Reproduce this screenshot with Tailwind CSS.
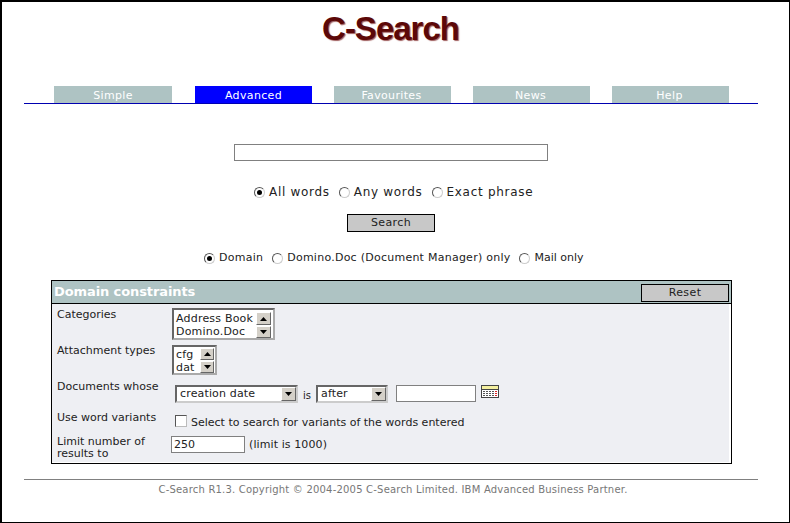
<!DOCTYPE html>
<html lang="en">
<head>
    <meta charset="UTF-8">
    <title>C-Search</title>
    <script src="https://cdn.jsdelivr.net/npm/@tailwindcss/browser@4"></script>
</head>
<body class="bg-white">
    <div class="w-[790px] h-[523px] overflow-hidden border-t-2 border-l-2 border-r border-b border-black flex flex-col font-['DejaVu_Sans',sans-serif] text-[11px] text-[#222]">
        <!-- Title -->
        <h1 class="mt-[7px] h-[40px] pr-[10px] text-center font-['Liberation_Sans',sans-serif] font-bold text-[33px] leading-[40px] tracking-[-1px] text-[#5c0808] [text-shadow:1px_1px_1px_#a06060]">C-Search</h1>

        <!-- Tabs -->
        <div class="mt-[37px] ml-[22px] w-[734px] h-[18px] pl-[30px] flex gap-[22px] border-b border-[#0000b0] text-white tracking-[0.35px]">
            <a class="w-[118px] h-[17px] bg-[#aec3c3] text-center leading-[20px]">Simple</a>
            <a class="ml-[1px] w-[117px] h-[17px] bg-[#0000ff] text-center leading-[20px]">Advanced</a>
            <a class="w-[117px] h-[17px] bg-[#aec3c3] text-center leading-[20px] pr-[2px]">Favourites</a>
            <a class="w-[117px] h-[17px] bg-[#aec3c3] text-center leading-[20px] pr-[2px]">News</a>
            <a class="w-[117px] h-[17px] bg-[#aec3c3] text-center leading-[20px] pr-[2px]">Help</a>
        </div>

        <!-- Search box -->
        <div class="mt-[40px] ml-[232px] w-[314px] h-[17px] border border-[#808080] bg-white"></div>

        <div class="mt-[22px] ml-[252px] flex items-center h-[18px] text-[12px] tracking-[0.7px]">
            <span class="w-[11px] h-[11px] rounded-full border border-t-[#555] border-l-[#555] border-r-[#ccc] border-b-[#ccc] bg-white flex items-center justify-center mr-[4px]"><span class="w-[5px] h-[5px] rounded-full bg-black"></span></span>
            <span class="mr-[9px]">All words</span>
            <span class="w-[11px] h-[11px] rounded-full border border-t-[#555] border-l-[#555] border-r-[#ccc] border-b-[#ccc] bg-white mr-[4px]"></span>
            <span class="mr-[9px]">Any words</span>
            <span class="w-[11px] h-[11px] rounded-full border border-t-[#555] border-l-[#555] border-r-[#ccc] border-b-[#ccc] bg-white mr-[4px]"></span>
            <span>Exact phrase</span>
        </div>

        <div class="mt-[13px] ml-[345px] w-[88px] h-[18px] border border-black bg-[#c8c8c8] text-center leading-[16px] tracking-[0.4px]">Search</div>

        <div class="mt-[18px] ml-[202px] flex items-center h-[16px] tracking-[0.25px]">
            <span class="w-[11px] h-[11px] rounded-full border border-t-[#555] border-l-[#555] border-r-[#ccc] border-b-[#ccc] bg-white flex items-center justify-center mr-[4px]"><span class="w-[5px] h-[5px] rounded-full bg-black"></span></span>
            <span class="mr-[9px]">Domain</span>
            <span class="w-[11px] h-[11px] rounded-full border border-t-[#555] border-l-[#555] border-r-[#ccc] border-b-[#ccc] bg-white mr-[4px]"></span>
            <span class="mr-[9px]">Domino.Doc (Document Manager) only</span>
            <span class="w-[11px] h-[11px] rounded-full border border-t-[#555] border-l-[#555] border-r-[#ccc] border-b-[#ccc] bg-white mr-[4px]"></span>
            <span class="tracking-[0px]">Mail only</span>
        </div>

        <!-- Domain constraints panel -->
        <div class="mt-[14px] ml-[49px] w-[681px] h-[184px] border border-black bg-white flex flex-col">
            <div class="h-[23px] shrink-0 bg-[#aec3c3] border-b border-black flex items-center justify-between pl-[2px] pr-[2px]">
                <span class="text-white font-bold text-[13px] tracking-[-0.1px]">Domain constraints</span>
                <span class="mt-[1px] w-[88px] h-[18px] border border-black bg-[#c8c8c8] text-center leading-[16px] tracking-[0.4px]">Reset</span>
            </div>
            <div class="flex-1 mr-[2px] mb-[1px] bg-[#eeeff3] pl-[5px]">
                <div class="flex h-[41px] pt-[4px] items-start">
                    <span class="w-[115px] -mt-[1px]">Categories</span>
                    <div class="w-[103px] h-[32px] border-2 border-t-[#666] border-l-[#666] border-r-[#aaa] border-b-[#aaa] bg-white flex justify-between leading-[13px] pl-[2px] pt-[2px] pr-[2px] tracking-[0.2px] whitespace-nowrap">
                        <div>Address Book<br>Domino.Doc</div>
                        <div class="w-[15px] flex flex-col gap-[1px]">
                            <span class="h-[13px] bg-[#d4d0c8] border border-t-white border-l-white border-r-[#666] border-b-[#666] flex items-center justify-center"><svg width="7" height="4"><path d="M3.5 0L7 4H0z" fill="#000"/></svg></span>
                            <span class="h-[12px] bg-[#d4d0c8] border border-t-white border-l-white border-r-[#666] border-b-[#666] flex items-center justify-center"><svg width="7" height="4"><path d="M0 0H7L3.5 4z" fill="#000"/></svg></span>
                        </div>
                    </div>
                </div>
                <div class="flex h-[39px] items-start">
                    <span class="w-[115px] -mt-[2px]">Attachment types</span>
                    <div class="w-[45px] h-[30px] border-2 border-t-[#666] border-l-[#666] border-r-[#aaa] border-b-[#aaa] bg-white flex justify-between leading-[13px] pl-[2px] pt-[1px] tracking-[0.2px]">
                        <div>cfg<br>dat</div>
                        <div class="w-[15px] flex flex-col gap-[1px] pr-[1px]">
                            <span class="h-[12px] bg-[#d4d0c8] border border-t-white border-l-white border-r-[#666] border-b-[#666] flex items-center justify-center"><svg width="7" height="4"><path d="M3.5 0L7 4H0z" fill="#000"/></svg></span>
                            <span class="h-[12px] bg-[#d4d0c8] border border-t-white border-l-white border-r-[#666] border-b-[#666] flex items-center justify-center"><svg width="7" height="4"><path d="M0 0H7L3.5 4z" fill="#000"/></svg></span>
                        </div>
                    </div>
                </div>
                <div class="flex h-[29px] items-start">
                    <span class="w-[118px] -mt-[5px]">Documents whose</span>
                    <div class="mt-[1px] w-[123px] h-[18px] border-2 border-t-[#666] border-l-[#666] border-r-[#ccc] border-b-[#ccc] bg-white flex justify-between items-center pl-[3px] tracking-[0.15px]">
                        <span class="mt-[1px]">creation date</span>
                        <span class="w-[15px] h-[14px] bg-[#d4d0c8] border border-t-white border-l-white border-r-[#666] border-b-[#666] flex items-center justify-center"><svg width="7" height="4"><path d="M0 0H7L3.5 4z" fill="#000"/></svg></span>
                    </div>
                    <span class="ml-[5px] mr-[5px] mt-[4px] text-[10px]">is</span>
                    <div class="mt-[1px] w-[72px] h-[18px] border-2 border-t-[#666] border-l-[#666] border-r-[#ccc] border-b-[#ccc] bg-white flex justify-between items-center pl-[3px] tracking-[0.15px]">
                        <span class="mt-[1px]">after</span>
                        <span class="w-[15px] h-[14px] bg-[#d4d0c8] border border-t-white border-l-white border-r-[#666] border-b-[#666] flex items-center justify-center"><svg width="7" height="4"><path d="M0 0H7L3.5 4z" fill="#000"/></svg></span>
                    </div>
                    <div class="mt-[1px] ml-[8px] w-[80px] h-[17px] border border-[#808080] bg-white"></div>
                    <svg class="mt-[1px] ml-[5px]" width="18" height="13" viewBox="0 0 18 13">
                        <rect x="0.5" y="0.5" width="17" height="12" fill="#fff" stroke="#444"/>
                        <rect x="1" y="1" width="16" height="3" fill="#f4f0a0"/>
                        <path d="M1 4.5H17" stroke="#444"/>
                        <path d="M2 6.5H16M2 8.5H16M2 10.5H16" stroke="#555" stroke-dasharray="2 1"/>
                        <path d="M14 6.5H16M14 8.5H16M14 10.5H16" stroke="#d22"/>
                    </svg>
                </div>
                <div class="flex h-[23px] items-start">
                    <span class="w-[118px] -mt-[3px]">Use word variants</span>
                    <span class="w-[12px] h-[12px] mt-[2px] border border-t-[#555] border-l-[#555] border-r-[#bbb] border-b-[#bbb] bg-white mr-[4px]"></span>
                    <span class="mt-[2px]">Select to search for variants of the words entered</span>
                </div>
                <div class="flex items-start">
                    <span class="w-[114px] leading-[12px]">Limit number of results to</span>
                    <div class="w-[74px] h-[17px] border border-[#808080] bg-white pl-[2px] leading-[15px]">250</div>
                    <span class="ml-[4px] mt-[1px] tracking-[0.1px]">(limit is 1000)</span>
                </div>
            </div>
        </div>

        <!-- Footer -->
        <div class="mt-[15px] ml-[22px] w-[734px] border-t border-[#808080] pt-[3px] pl-[4px] text-center text-[10px] leading-[14px] text-[#777] tracking-[0.2px]">C-Search R1.3. Copyright © 2004-2005 C-Search Limited. IBM Advanced Business Partner.</div>
    </div>
</body>
</html>
